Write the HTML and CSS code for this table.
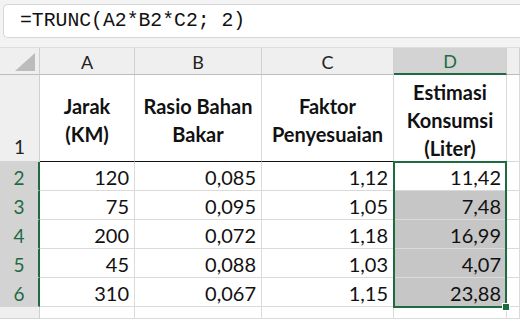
FILE: index.html
```html
<!DOCTYPE html>
<html>
<head>
<meta charset="utf-8">
<link rel="stylesheet" href="styles.css">
</head>
<body>
<div class="app">
  <div class="fbar">
    <div class="fbox">=TRUNC(A2*B2*C2; 2)</div>
  </div>
  <div class="sheet">
    <div class="corner"><span class="tri"></span></div>
    <div class="ch">A</div>
    <div class="ch">B</div>
    <div class="ch">C</div>
    <div class="ch sel">D</div>
    <div class="ch"></div>

    <div class="rh head">1</div>
    <div class="c hd">Jarak<br>(KM)</div>
    <div class="c hd">Rasio Bahan<br>Bakar</div>
    <div class="c hd">Faktor<br>Penyesuaian</div>
    <div class="c hd">Estimasi<br>Konsumsi<br>(Liter)</div>
    <div class="c hdx"></div>

    <div class="rh sel">2</div>
    <div class="c n">120</div>
    <div class="c n">0,085</div>
    <div class="c n">1,12</div>
    <div class="c n">11,42</div>
    <div class="c"></div>

    <div class="rh sel">3</div>
    <div class="c n">75</div>
    <div class="c n">0,095</div>
    <div class="c n">1,05</div>
    <div class="c n shade">7,48</div>
    <div class="c"></div>

    <div class="rh sel">4</div>
    <div class="c n">200</div>
    <div class="c n">0,072</div>
    <div class="c n">1,18</div>
    <div class="c n shade">16,99</div>
    <div class="c"></div>

    <div class="rh sel">5</div>
    <div class="c n">45</div>
    <div class="c n">0,088</div>
    <div class="c n">1,03</div>
    <div class="c n shade">4,07</div>
    <div class="c"></div>

    <div class="rh sel">6</div>
    <div class="c n">310</div>
    <div class="c n">0,067</div>
    <div class="c n">1,15</div>
    <div class="c n shade">23,88</div>
    <div class="c"></div>

    <div class="rh"></div>
    <div class="c"></div>
    <div class="c"></div>
    <div class="c"></div>
    <div class="c"></div>
    <div class="c"></div>

    <div class="selection"><span class="handle"></span></div>
  </div>
</div>
</body>
</html>
```

FILE: styles.css
```css
html, body {
  margin: 0;
  padding: 0;
  background: #ffffff;
  overflow: hidden;
}
.app {
  width: 520px;
  height: 319px;
  display: flex;
  flex-direction: column;
  background: #f3f3f3;
  overflow: hidden;
}
.fbar {
  flex: 0 0 47px;
  height: 47px;
  padding: 4px 0 0 3px;
  box-sizing: border-box;
}
.fbox {
  height: 34px;
  box-sizing: border-box;
  background: #ffffff;
  border: 1px solid #d6d6d6;
  border-right: none;
  border-radius: 5px 0 0 5px;
  padding-left: 16px;
  font-family: "Liberation Mono", monospace;
  font-size: 19.75px;
  line-height: 32px;
  color: #111;
  white-space: pre;
}
.sheet {
  flex: 1 1 auto;
  min-height: 0;
  display: grid;
  grid-template-columns: 40px 95px 127px 132px 113px 1fr;
  grid-template-rows: 28px 87px 29px 29px 29px 29px 29px 1fr;
  background: #fff;
  font-family: Lato, "Liberation Sans", sans-serif;
  color: #111;
  position: relative;
}
.corner {
  background: #efefef;
  border-right: 1px solid #cfcfcf;
  border-bottom: 1px solid #bdbdbd;
  border-top: 1px solid #dedede;
  position: relative;
}
.tri {
  position: absolute;
  right: 4px;
  bottom: 3px;
  width: 0;
  height: 0;
  border-left: 20px solid transparent;
  border-bottom: 18px solid #bcbcbc;
}
.ch {
  background: #efefef;
  border-right: 1px solid #cfcfcf;
  border-bottom: 1px solid #bdbdbd;
  border-top: 1px solid #dedede;
  display: flex;
  align-items: center;
  justify-content: center;
  font-size: 18px;
  color: #222;
  padding-top: 1px;
}
.ch.sel {
  background: #d3d3d3;
  color: #1e6b41;
  border-bottom: 2px solid #1e6b41;
}
.rh {
  background: #efefef;
  border-right: 1px solid #cfcfcf;
  border-bottom: 1px solid #d4d4d4;
  display: flex;
  align-items: center;
  justify-content: center;
  font-size: 19px;
  color: #222;
}
.rh.head {
  align-items: flex-end;
  padding-bottom: 1px;
  line-height: 26px;
}
.rh.sel {
  background: #d3d3d3;
  color: #1e6b41;
  border-right: 2px solid #1e6b41;
  padding-top: 2px;
}
.c {
  border-right: 1px solid #dadada;
  border-bottom: 1px solid #dadada;
  font-size: 20px;
}
.hd {
  display: flex;
  align-items: center;
  justify-content: center;
  text-align: center;
  font-weight: bold;
  line-height: 28px;
  border-bottom: 1px solid #111;
  padding-top: 3px;
  box-sizing: border-box;
}
.n {
  display: flex;
  align-items: center;
  justify-content: flex-end;
  padding: 2px 5px 0 0;
}
.shade {
  background: #c6c6c6;
}
.selection {
  grid-column: 5 / 6;
  grid-row: 3 / 8;
  position: absolute;
  top: -1px;
  bottom: -1px;
  left: -1px;
  right: 0;
  border: 2px solid #1e6b41;
  pointer-events: none;
}
.handle {
  position: absolute;
  right: -5px;
  bottom: -5px;
  width: 6px;
  height: 6px;
  background: #1e6b41;
  border: 1px solid #fff;
}
```
